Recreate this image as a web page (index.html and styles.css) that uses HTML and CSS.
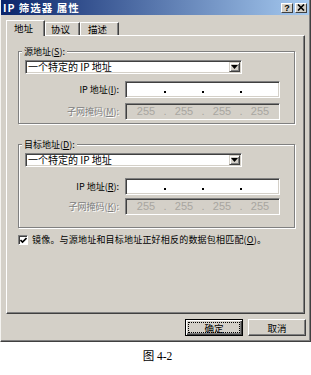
FILE: index.html
```html
<!DOCTYPE html>
<html>
<head>
<meta charset="utf-8">
<link rel="stylesheet" href="styles.css">
</head>
<body>
<div class="window">
  <div class="titlebar">
    <span class="title">IP 筛选器 属性</span>
    <div class="tbtns">
      <span class="tbtn">?</span>
      <span class="tbtn"><svg width="8" height="7" viewBox="0 0 8 7"><path d="M1 0.5 L7 6.5 M7 0.5 L1 6.5" stroke="#000" stroke-width="1.6"/></svg></span>
    </div>
  </div>
  <div class="tabs">
    <div class="tab t1 active">地址</div>
    <div class="tab t2">协议</div>
    <div class="tab t3">描述</div>
  </div>
  <div class="panel">
    <fieldset class="group g1">
      <legend>源地址(<u>S</u>):</legend>
      <div class="combo"><span class="ctext">一个特定的 IP 地址</span><span class="arrow"><svg width="7" height="4" viewBox="0 0 7 4"><path d="M0 0 H7 L3.5 4 Z" fill="#000"/></svg></span></div>
      <div class="row r-ip"><span class="lbl">IP 地址(<u>I</u>):</span><div class="ipfield"><span class="seg"></span><span class="dot"></span><span class="seg"></span><span class="dot"></span><span class="seg"></span><span class="dot"></span><span class="seg"></span></div></div>
      <div class="row r-mask off"><span class="lbl">子网掩码(<u>M</u>):</span><div class="ipfield dis"><span class="seg">255</span><span class="pd">.</span><span class="seg">255</span><span class="pd">.</span><span class="seg">255</span><span class="pd">.</span><span class="seg">255</span></div></div>
    </fieldset>
    <fieldset class="group g2">
      <legend>目标地址(<u>D</u>):</legend>
      <div class="combo"><span class="ctext">一个特定的 IP 地址</span><span class="arrow"><svg width="7" height="4" viewBox="0 0 7 4"><path d="M0 0 H7 L3.5 4 Z" fill="#000"/></svg></span></div>
      <div class="row r-ip"><span class="lbl">IP 地址(<u>R</u>):</span><div class="ipfield"><span class="seg"></span><span class="dot"></span><span class="seg"></span><span class="dot"></span><span class="seg"></span><span class="dot"></span><span class="seg"></span></div></div>
      <div class="row r-mask off"><span class="lbl">子网掩码(<u>K</u>):</span><div class="ipfield dis"><span class="seg">255</span><span class="pd">.</span><span class="seg">255</span><span class="pd">.</span><span class="seg">255</span><span class="pd">.</span><span class="seg">255</span></div></div>
    </fieldset>
    <div class="check">
      <span class="box"><svg width="7" height="7" viewBox="0 0 7 7"><path d="M0.5 3 L2.5 5 L6.5 1" fill="none" stroke="#000" stroke-width="1.6"/></svg></span>
      <span class="ctxt">镜像。与源地址和目标地址正好相反的数据包相匹配(<u>O</u>)。</span>
    </div>
  </div>
  <div class="buttons">
    <div class="btn default"><span class="focus">确定</span></div>
    <div class="btn">取消</div>
  </div>
</div>
<div class="caption">图 4-2</div>
</body>
</html>
```

FILE: styles.css
```css
html, body {
  margin: 0;
  padding: 0;
  background: #fff;
}
body {
  width: 311px;
  height: 375px;
  font-family: "Noto Sans CJK SC", "Liberation Sans", sans-serif;
  font-size: 9px;
  color: #000;
  overflow: hidden;
}
u { text-decoration: underline; }

.window {
  width: 311px;
  height: 342px;
  box-sizing: border-box;
  background: #d4d0c8;
  border-left: 1px solid #f4f3f0;
  border-right: 1px solid #404040;
  border-bottom: 1px solid #404040;
  box-shadow: inset -1px -1px 0 #808080;
  display: flex;
  flex-direction: column;
}

.titlebar {
  height: 15px;
  margin-right: 1px;
  background: linear-gradient(to right, #0a246a, #a6caf0);
  display: flex;
  align-items: center;
  justify-content: space-between;
  padding: 0 2px 0 2px;
}
.title {
  color: #fff;
  font-weight: bold;
  font-size: 10.5px;
  line-height: 15px;
  letter-spacing: 1px;
}
.tbtns { display: flex; gap: 2px; }
.tbtn {
  width: 12px;
  height: 10px;
  box-sizing: border-box;
  background: #d4d0c8;
  border: 1px solid;
  border-color: #fff #404040 #404040 #fff;
  font: bold 9px/8px "Liberation Sans", sans-serif;
  text-align: center;
  display: flex;
  align-items: center;
  justify-content: center;
}

.tabs {
  display: flex;
  align-items: flex-end;
  height: 15px;
  margin: 5px 0 0 5px;
  position: relative;
  z-index: 1;
}
.tab {
  height: 13px;
  box-sizing: border-box;
  border: 1px solid;
  border-bottom: none;
  border-color: #fff #404040 transparent #fff;
  box-shadow: inset -1px 0 0 #808080;
  line-height: 12px;
  padding-left: 5px;
  font-size: 9.5px;
}
.t1 { width: 39px; padding-left: 7px; }
.t2 { width: 35px; }
.t3 { width: 39px; padding-left: 7px; }
.tab.active {
  height: 16px;
  margin-bottom: -1px;
  background: #d4d0c8;
  line-height: 14px;
}

.panel {
  margin: 0 5px;
  height: 279px;
  box-sizing: border-box;
  border: 1px solid;
  border-color: #fff #404040 #404040 #fff;
  box-shadow: inset -1px -1px 0 #808080;
  padding: 0 9px 0 11px;
  display: flex;
  flex-direction: column;
}

.group {
  margin: 10px 0 0 0;
  padding: 0 6px 3px 6px;
  border: 1px solid #808080;
  box-shadow: 1px 1px 0 #fff, inset 1px 1px 0 #fff;
  min-width: 0;
}
.g2 { margin-top: 15px; padding-bottom: 12px; }
.group legend {
  padding: 0 2px;
  margin-left: -3px;
  line-height: 11px;
  background: #d4d0c8;
}

.combo {
  margin-top: 3px;
  width: 217px;
  height: 14px;
  box-sizing: border-box;
  background: #fff;
  border: 1px solid;
  border-color: #808080 #fff #fff #808080;
  box-shadow: inset 1px 1px 0 #404040, inset -1px -1px 0 #d4d0c8;
  display: flex;
  align-items: center;
  padding: 0 1px 0 2px;
}
.ctext { flex: 1; font-size: 10px; line-height: 12px; }
.arrow {
  width: 11px;
  height: 10px;
  box-sizing: border-box;
  background: #d4d0c8;
  border: 1px solid;
  border-color: #d4d0c8 #404040 #404040 #d4d0c8;
  box-shadow: inset 1px 1px 0 #fff, inset -1px -1px 0 #808080;
  display: flex;
  align-items: center;
  justify-content: center;
}

.row {
  display: flex;
  align-items: center;
  gap: 6px;
}
.r-ip { margin-top: 7px; }
.r-mask { margin-top: 5px; }
.g2 .r-ip { margin-top: 11px; }
.g2 .r-mask { margin-top: 3px; }
.lbl {
  width: 94px;
  text-align: right;
  line-height: 12px;
}
.off .lbl { color: #808080; text-shadow: 1px 1px 0 #fff; }

.ipfield {
  width: 155px;
  height: 17px;
  box-sizing: border-box;
  background: #fff;
  border: 1px solid;
  border-color: #808080 #fff #fff #808080;
  box-shadow: inset 1px 1px 0 #404040, inset -1px -1px 0 #d4d0c8;
  display: flex;
  align-items: center;
  padding-left: 5px;
  font-family: "Liberation Sans", sans-serif;
  font-size: 11px;
}
.ipfield.dis { background: #d4d0c8; color: #a8a6a0; }
.seg { width: 30px; text-align: center; line-height: 13px; }
.dot {
  width: 8px;
  height: 13px;
  display: flex;
  align-items: flex-end;
  justify-content: center;
  padding-bottom: 3px;
  box-sizing: border-box;
}
.dot::before {
  content: "";
  width: 2px;
  height: 2px;
  background: #000;
}
.pd { width: 8px; text-align: center; line-height: 13px; }

.check {
  display: flex;
  align-items: center;
  gap: 4px;
  margin-top: 6px;
}
.box {
  width: 10px;
  height: 10px;
  box-sizing: border-box;
  background: #fff;
  border: 1px solid;
  border-color: #808080 #fff #fff #808080;
  box-shadow: inset 1px 1px 0 #404040;
  display: flex;
  align-items: center;
  justify-content: center;
}
.ctxt { line-height: 12px; letter-spacing: 0.2px; }

.buttons {
  display: flex;
  justify-content: flex-end;
  gap: 5px;
  margin: 5px 4px 0 0;
}
.btn {
  width: 58px;
  height: 17px;
  box-sizing: border-box;
  background: #d4d0c8;
  border: 1px solid;
  border-color: #fff #404040 #404040 #fff;
  box-shadow: inset -1px -1px 0 #808080;
  display: flex;
  align-items: center;
  justify-content: center;
  line-height: 12px;
  font-size: 9.5px;
}
.btn.default {
  border: 1px solid #000;
  box-shadow: inset 1px 1px 0 #fff, inset -1px -1px 0 #404040, inset -2px -2px 0 #808080;
  padding: 3px;
}
.focus {
  flex: 1;
  height: 9px;
  outline: 1px dotted #000;
  display: flex;
  align-items: center;
  justify-content: center;
}

.caption {
  text-align: center;
  margin-top: 8px;
  margin-left: 4px;
  font-family: "Liberation Serif", "Noto Sans CJK SC", serif;
  font-size: 11.5px;
  line-height: 12px;
}
```
